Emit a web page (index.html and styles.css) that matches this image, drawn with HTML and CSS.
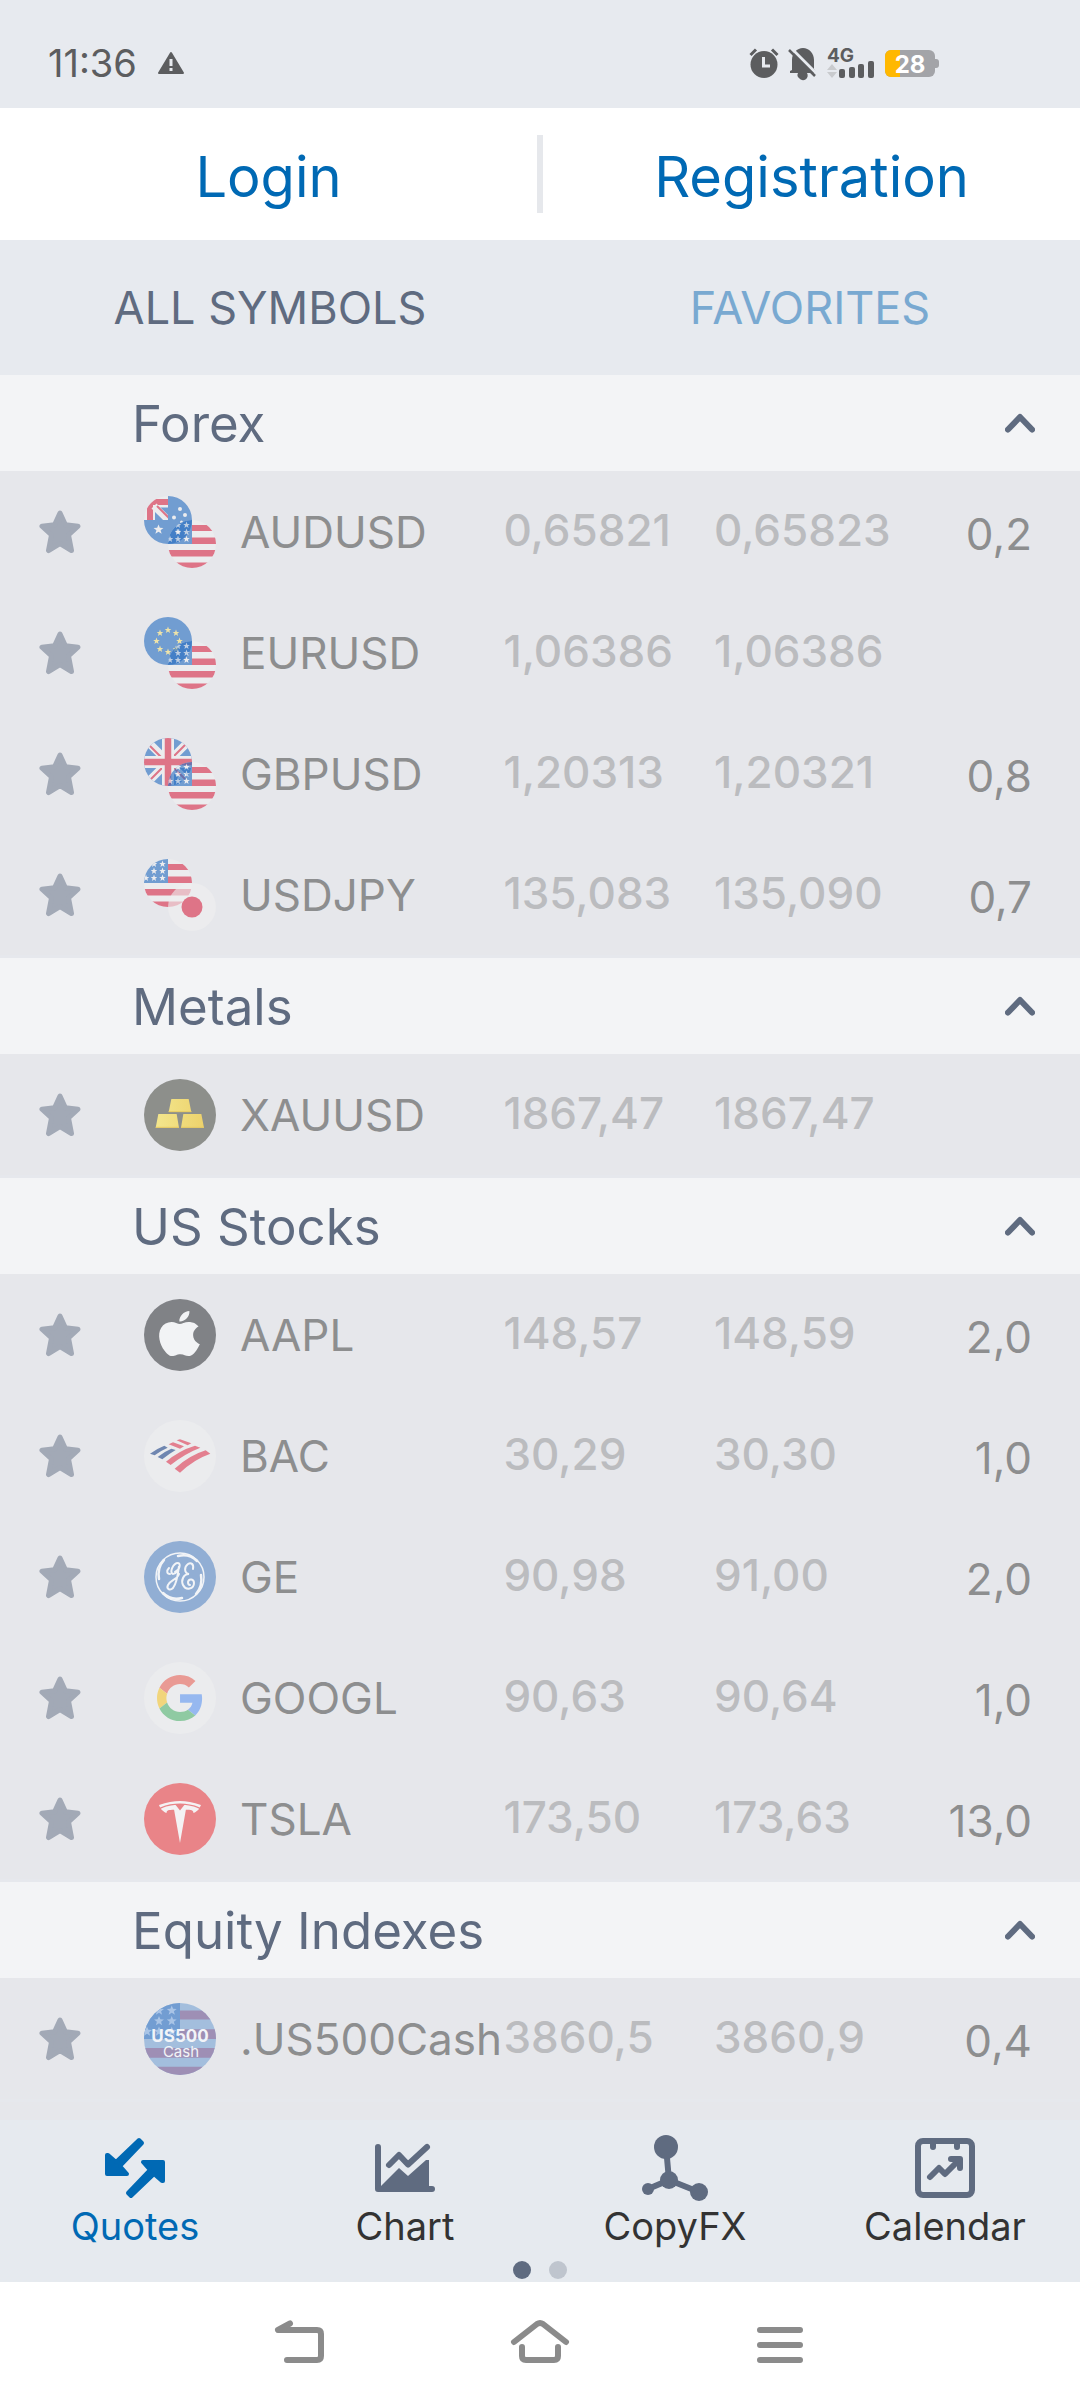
FILE: index.html
```html
<!doctype html>
<html lang="en">
<head>
<meta charset="UTF-8">
<meta name="viewport" content="width=device-width">
<title>Quotes</title>
<link rel="stylesheet" href="styles.css">
</head>

<body>
<!-- shared shapes -->
<svg class="defs" aria-hidden="true">
	<defs>
		<clipPath id="round"><circle cx="24" cy="24" r="24"/></clipPath>
		<clipPath id="canton"><path d="M0 24A24 24 0 0 1 24 0V24z"/></clipPath>
		<linearGradient id="goldFill"><stop offset="0" stop-color="#f3e68d"/><stop offset="1" stop-color="#edd26c"/></linearGradient>
		<path id="pt" d="M0-3.4.9-1.1 3.3-1 1.4.5 2.1 2.9 0 1.5-2.1 2.9-1.4.5-3.3-1-.9-1.1z"/>
	</defs>
	<symbol id="star" viewBox="0 0 42 44">
		<path d="M21 3l5.400 11.800L39 16.200 29.500 25 32.500 40.500 21 33.500 9.500 40.500 12.500 25 3 16.200 15.600 14.800z" fill="#a2a9b6" stroke="#a2a9b6" stroke-width="5" stroke-linejoin="round"/>
	</symbol>
	<symbol id="up" viewBox="0 0 30 20">
		<path d="M3 16.500 15 4 27 16.500" fill="none" stroke="#5f6b80" stroke-width="6" stroke-linecap="round" stroke-linejoin="round"/>
	</symbol>
	<symbol id="us" viewBox="0 0 48 48">
		<g clip-path="url(#round)">
			<path fill="#f0f0f0" d="M0 0h48v48H0z"/>
			<path fill="#d92946" d="M24 5h24v6H24zM24 17.500h24V24H24zM0 30h48v6.500H0zM0 42.500h48V48H0z"/>
			<path fill="#256cc1" d="M0 0h24v24H0z"/>
			<g fill="#f0f0f0"><use href="#pt" x="10" y="5"/><use href="#pt" x="18.500" y="5"/><use href="#pt" x="10" y="12"/><use href="#pt" x="18.500" y="12"/><use href="#pt" x="2" y="19"/><use href="#pt" x="10" y="19"/><use href="#pt" x="18.500" y="19"/></g>
		</g>
	</symbol>
	<symbol id="au" viewBox="0 0 48 48">
		<path fill="#256cc1" d="M24 0A24 24 0 1 1 0 24H24z"/>
		<g clip-path="url(#canton)">
			<path fill="#f0f0f0" d="M0 0h24v24H0z"/>
			<path fill="#d92946" d="M3 24V10l7-7h14v6H9v15z"/>
			<path fill="#256cc1" d="M12 11.500h12V24H11V12z"/>
			<path stroke="#f0f0f0" stroke-width="7" d="M10 10 26 26"/>
			<path stroke="#d92946" stroke-width="2" d="M13 10 26 23"/>
		</g>
		<g fill="#f0f0f0"><use href="#pt" transform="translate(14.500 33.500) scale(1.500)"/><circle cx="36" cy="13" r="2"/><circle cx="30" cy="21.500" r="2"/><circle cx="41" cy="19" r="2"/><circle cx="37.500" cy="26" r="1.500"/><circle cx="34" cy="35.500" r="2.500"/></g>
	</symbol>
	<symbol id="eu" viewBox="0 0 48 48">
		<circle cx="24" cy="24" r="24" fill="#256cc1"/>
		<g fill="#f5e27c"><use href="#pt" x="24" y="13"/><use href="#pt" x="32" y="16"/><use href="#pt" x="35.500" y="24"/><use href="#pt" x="32" y="32"/><use href="#pt" x="24" y="35"/><use href="#pt" x="16" y="32"/><use href="#pt" x="12.500" y="24"/><use href="#pt" x="16" y="16"/></g>
	</symbol>
	<symbol id="gb" viewBox="0 0 48 48">
		<g clip-path="url(#round)">
			<path fill="#256cc1" d="M0 0h48v48H0z"/>
			<path stroke="#f0f0f0" stroke-width="8" d="M0 0 48 48M48 0 0 48"/>
			<path stroke="#d92946" stroke-width="2" d="M4 6 20 22M42 6 26 22M6 42 20 28M28 28 44 44"/>
			<path stroke="#f0f0f0" stroke-width="12" d="M24 0v48M0 24h48"/>
			<path stroke="#d92946" stroke-width="6.500" d="M24 0v48M0 24h48"/>
		</g>
	</symbol>
	<symbol id="jp" viewBox="0 0 48 48">
		<circle cx="24" cy="24" r="24" fill="#f0f0f0"/>
		<circle cx="24" cy="24" r="10.500" fill="#d92946"/>
	</symbol>
</svg>

<header class="status">
	<time>11:36</time>
	<svg class="warn" viewBox="0 0 28 24"><path d="M14 2 26 22H2z" fill="#5c5d5f" stroke="#5c5d5f" stroke-width="2" stroke-linejoin="round"/><path d="M14 8v7M14 17v3" stroke="#e7eaef" stroke-width="3"/></svg>
	<div class="status-right">
		<svg width="30" height="30" viewBox="0 0 30 30"><circle cx="15" cy="16.500" r="13.500" fill="#5c5d5f"/><path d="M1.500 7 7 1.500M23 1.500 28.500 7" stroke="#5c5d5f" stroke-width="3"/><path d="M14.500 9v9H21" fill="none" stroke="#e7eaef" stroke-width="3"/></svg>
		<svg width="28" height="30" viewBox="0 0 28 30"><path d="M3 22V12C3 5 8 0 14 0s11 5 11 12v9l2 3v1H18a4 4 0 0 1-8 5 4 4 0 0 1-1-5H1v-2z" fill="#5c5d5f"/><path d="M2 0 28 26" stroke="#e7eaef" stroke-width="3"/><path d="M0 2 26 28" stroke="#5c5d5f" stroke-width="2.500"/></svg>
		<svg class="signal" width="48" height="30" viewBox="0 0 48 30"><text x="0" y="14">4G</text><path d="M0 22 5 16l5 6zM0 24h10l-5 6z" fill="#c9cbce"/><g fill="#5c5d5f"><rect x="12" y="21" width="6" height="9" rx="2"/><rect x="22" y="19" width="6" height="11" rx="2"/><rect x="31" y="16" width="6" height="14" rx="2"/><rect x="41" y="13" width="6" height="17" rx="2"/></g></svg>
		<svg class="battery" width="54" height="27" viewBox="0 0 54 27"><path d="M49 9h2a3 3 0 0 1 3 3v3a3 3 0 0 1-3 3h-2z" fill="#a3a4a8"/><rect width="50" height="27" rx="6" fill="#a3a4a8"/><path d="M6 0h9v27H6a6 6 0 0 1-6-6V6a6 6 0 0 1 6-6z" fill="#ffb800"/><text x="25" y="23" text-anchor="middle">28</text></svg>
	</div>
</header>

<div class="account">
	<a href="#">Login</a>
	<a href="#">Registration</a>
</div>

<div class="tabs">
	<button class="on">ALL SYMBOLS</button>
	<button>FAVORITES</button>
</div>

<main>
<table class="quotes">
	<colgroup><col class="c-star"><col class="c-name"><col class="c-price"><col class="c-price"><col></colgroup>
	<tbody>
		<tr class="group"><th colspan="5"><div><span>Forex</span><button aria-label="Collapse"><svg><use href="#up"/></svg></button></div></th></tr>
		<tr>
			<td><button class="fav" aria-label="Favorite"><svg><use href="#star"/></svg></button></td>
			<td><div class="name"><svg viewBox="0 0 72 72"><use href="#au" width="48" height="48" opacity=".6"/><use href="#us" x="24" y="24" width="48" height="48" opacity=".6"/></svg>AUDUSD</div></td>
			<td class="price">0,65821</td><td class="price">0,65823</td><td class="spread">0,2</td>
		</tr>
		<tr>
			<td><button class="fav" aria-label="Favorite"><svg><use href="#star"/></svg></button></td>
			<td><div class="name"><svg viewBox="0 0 72 72"><use href="#eu" width="48" height="48" opacity=".6"/><use href="#us" x="24" y="24" width="48" height="48" opacity=".6"/></svg>EURUSD</div></td>
			<td class="price">1,06386</td><td class="price">1,06386</td><td class="spread"></td>
		</tr>
		<tr>
			<td><button class="fav" aria-label="Favorite"><svg><use href="#star"/></svg></button></td>
			<td><div class="name"><svg viewBox="0 0 72 72"><use href="#gb" width="48" height="48" opacity=".6"/><use href="#us" x="24" y="24" width="48" height="48" opacity=".6"/></svg>GBPUSD</div></td>
			<td class="price">1,20313</td><td class="price">1,20321</td><td class="spread">0,8</td>
		</tr>
		<tr>
			<td><button class="fav" aria-label="Favorite"><svg><use href="#star"/></svg></button></td>
			<td><div class="name"><svg viewBox="0 0 72 72"><use href="#us" width="48" height="48" opacity=".6"/><use href="#jp" x="24" y="24" width="48" height="48" opacity=".6"/></svg>USDJPY</div></td>
			<td class="price">135,083</td><td class="price">135,090</td><td class="spread">0,7</td>
		</tr>
	</tbody>
	<tbody>
		<tr class="group"><th colspan="5"><div><span>Metals</span><button aria-label="Collapse"><svg><use href="#up"/></svg></button></div></th></tr>
		<tr>
			<td><button class="fav" aria-label="Favorite"><svg><use href="#star"/></svg></button></td>
			<td><div class="name"><svg viewBox="0 0 216 216"><circle cx="108" cy="108" r="108" fill="#8d8f8b"/><path fill="url(#goldFill)" d="M82 60h52l8 39H74zM43 105h55l7 41H35zM118 105h54l8 41h-69z"/><path stroke="#e8cb62" stroke-width="3" d="M74 98h68M35 145h70M111 145h69"/></svg>XAUUSD</div></td>
			<td class="price">1867,47</td><td class="price">1867,47</td><td class="spread"></td>
		</tr>
	</tbody>
	<tbody>
		<tr class="group"><th colspan="5"><div><span>US Stocks</span><button aria-label="Collapse"><svg><use href="#up"/></svg></button></div></th></tr>
		<tr>
			<td><button class="fav" aria-label="Favorite"><svg><use href="#star"/></svg></button></td>
			<td><div class="name"><svg viewBox="0 0 72 72"><circle cx="36" cy="36" r="36" fill="#808286"/><path fill="#f2f3f5" transform="translate(10.500 12) scale(2.080 1.880)" d="M12.152 6.896c-.948 0-2.415-1.078-3.960-1.040-2.040.027-3.910 1.183-4.961 3.014-2.117 3.675-.546 9.103 1.519 12.090 1.013 1.454 2.208 3.090 3.792 3.039 1.520-.065 2.090-.987 3.935-.987 1.831 0 2.350.987 3.960.948 1.637-.026 2.676-1.480 3.676-2.948 1.156-1.688 1.636-3.325 1.662-3.415-.039-.013-3.182-1.221-3.220-4.857-.026-3.040 2.480-4.494 2.597-4.559-1.429-2.090-3.623-2.324-4.390-2.376-2-.156-3.675 1.090-4.610 1.090zM15.530 3.830c.843-1.012 1.400-2.427 1.245-3.830-1.207.052-2.662.805-3.532 1.818-.780.896-1.454 2.338-1.273 3.714 1.338.104 2.715-.688 3.559-1.701"/></svg>AAPL</div></td>
			<td class="price">148,57</td><td class="price">148,59</td><td class="spread">2,0</td>
		</tr>
		<tr>
			<td><button class="fav" aria-label="Favorite"><svg><use href="#star"/></svg></button></td>
			<td><div class="name"><svg viewBox="0 0 216 216"><circle cx="108" cy="108" r="108" fill="#ebecee"/><path fill="#6f86b0" d="M18 101Q38 86 61 77l10 6Q50 92 32 106zM41 111Q60 95 82 86l13 4Q74 102 55 118z"/><path fill="#e37f8f" d="M66 125Q106 91 153 77l16 6Q122 101 80 135zM92 146Q136 106 185 91l14 10Q150 118 108 158zM74 73l13-6 33 12-12 7zM98 61l10-3 34 12-11 6z"/></svg>BAC</div></td>
			<td class="price">30,29</td><td class="price">30,30</td><td class="spread">1,0</td>
		</tr>
		<tr>
			<td><button class="fav" aria-label="Favorite"><svg><use href="#star"/></svg></button></td>
			<td><div class="name"><svg viewBox="0 0 72 72"><circle cx="36" cy="36" r="36" fill="#91aed4"/><g fill="none" stroke="#f2f4f7" stroke-linecap="round"><circle cx="36" cy="36" r="24" stroke-width="1.500"/><path stroke-width="2.500" d="M34 15q11-3 19 5M57 34q2 11-5 19M38 57q-11 3-19-5M15 38q-2-11 5-19"/><path stroke-width="2" d="M31 31c5-2 6-9 3-9-5 0-9 10-5 11 3 0 6-4 6-8-1 8-2 17-6 22-3 3-7 1-5-3 2-5 9-5 11-11M25 27c-3 3-2 6 1 6M49 28c1-5-2-7-5-5-4 3-4 9 1 10-6 0-8 7-6 11 3 6 11 4 11-2 0-4-5-5-6-1 0 2 1 3 2 3"/></g></svg>GE</div></td>
			<td class="price">90,98</td><td class="price">91,00</td><td class="spread">2,0</td>
		</tr>
		<tr>
			<td><button class="fav" aria-label="Favorite"><svg><use href="#star"/></svg></button></td>
			<td><div class="name"><svg viewBox="0 0 72 72"><circle cx="36" cy="36" r="36" fill="#ebecee"/><g transform="translate(13 13) scale(.960)"><path fill="#e99a94" d="M24 9.500c3.540 0 6.710 1.220 9.210 3.600l6.850-6.850C35.900 2.380 30.470 0 24 0 14.620 0 6.510 5.380 2.560 13.220l7.980 6.190C12.430 13.720 17.740 9.500 24 9.500z"/><path fill="#96b8f0" d="M46.980 24.550c0-1.570-.15-3.090-.38-4.550H24v9.020h12.940c-.58 2.960-2.260 5.480-4.780 7.180l7.730 6c4.510-4.180 7.090-10.360 7.090-17.650z"/><path fill="#f1d57c" d="M10.530 28.590c-.48-1.450-.76-2.990-.76-4.590s.27-3.140.76-4.590l-7.980-6.190C.92 16.460 0 20.120 0 24c0 3.880.92 7.540 2.560 10.780l7.970-6.190z"/><path fill="#8fcaa2" d="M24 48c6.480 0 11.930-2.130 15.890-5.810l-7.730-6c-2.150 1.450-4.920 2.300-8.160 2.300-6.260 0-11.570-4.220-13.470-9.910l-7.980 6.190C6.510 42.620 14.620 48 24 48z"/></g></svg>GOOGL</div></td>
			<td class="price">90,63</td><td class="price">90,64</td><td class="spread">1,0</td>
		</tr>
		<tr>
			<td><button class="fav" aria-label="Favorite"><svg><use href="#star"/></svg></button></td>
			<td><div class="name"><svg viewBox="0 0 72 72"><circle cx="36" cy="36" r="36" fill="#e98488"/><path fill="#f4f2f4" transform="translate(15 18) scale(1.750)" d="M12 5.362l2.475-3.026s4.245.090 8.471 2.054c-1.082 1.636-3.231 2.438-3.231 2.438-.146-1.439-1.154-1.790-4.354-1.790L12 24 8.619 5.034c-3.180 0-4.188.354-4.335 1.792 0 0-2.146-.795-3.229-2.430C5.280 2.431 9.525 2.340 9.525 2.340L12 5.362zm0-3.899c3.415-.030 7.326.528 11.328 2.280.535-.968.672-1.395.672-1.395C19.625.612 15.528.015 12 0 8.472.015 4.375.610 0 2.349c0 0 .195.525.672 1.396C4.674 1.989 8.585 1.435 12 1.460z"/></svg>TSLA</div></td>
			<td class="price">173,50</td><td class="price">173,63</td><td class="spread">13,0</td>
		</tr>
	</tbody>
	<tbody>
		<tr class="group"><th colspan="5"><div><span>Equity Indexes</span><button aria-label="Collapse"><svg><use href="#up"/></svg></button></div></th></tr>
		<tr>
			<td><button class="fav" aria-label="Favorite"><svg><use href="#star"/></svg></button></td>
			<td><div class="name"><svg class="us500" viewBox="0 0 72 72"><g clip-path="url(#round)" transform="scale(1.500)"><path fill="#a3bedd" d="M0 0h48v48H0z"/><path fill="#9e8fb5" d="M24 5h24v6H24zM24 17.500h24V24H24zM0 30h48v6.500H0zM0 42.500h48V48H0z"/><path fill="#729dd2" d="M0 0h24v24H0z"/><g fill="#a9c4e6"><use href="#pt" x="10" y="5"/><use href="#pt" x="18.500" y="5"/><use href="#pt" x="10" y="12"/><use href="#pt" x="18.500" y="12"/><use href="#pt" x="2" y="19"/><use href="#pt" x="10" y="19"/><use href="#pt" x="18.500" y="19"/></g></g><text class="b" x="36" y="39" text-anchor="middle">US500</text><text x="37" y="54" text-anchor="middle">Cash</text></svg>.US500Cash</div></td>
			<td class="price">3860,5</td><td class="price">3860,9</td><td class="spread">0,4</td>
		</tr>
	</tbody>
</table>
</main>

<nav class="menu">
	<ul>
		<li class="on"><a href="#"><svg viewBox="-3 -3 66 66"><g fill="#0069b4" stroke="#0069b4" stroke-width="4" stroke-linejoin="round"><path d="M2 17v19h20l-7-8L37 5l-3-3-23 22-8-7z"/><path transform="rotate(180 30 30)" d="M2 17v19h20l-7-8L37 5l-3-3-23 22-8-7z"/></g></svg>Quotes</a></li>
		<li><a href="#"><svg viewBox="-3 -9 66 66"><g fill="none" stroke="#5f6b80" stroke-width="6" stroke-linecap="round" stroke-linejoin="round"><path d="M3 3v42h54"/><path d="M14 21 24 11l9 9.500L52 3"/></g><path fill="#5f6b80" d="M6 42 24 24l9 8 18-16h3v29H6z"/></svg>Chart</a></li>
		<li><a href="#"><svg viewBox="0 0 66 66"><path fill="none" stroke="#5f6b80" stroke-width="6" d="M24 12 27 45 6 54M27 45l30 12"/><g fill="#5f6b80"><circle cx="24" cy="12" r="12"/><circle cx="27" cy="45" r="9"/><circle cx="6" cy="54" r="6"/><circle cx="57" cy="57" r="9"/></g></svg>CopyFX</a></li>
		<li><a href="#"><svg viewBox="-3 -3 66 66"><g fill="none" stroke="#5f6b80" stroke-width="6" stroke-linecap="round" stroke-linejoin="round"><rect x="3" y="3" width="54" height="54" rx="5"/><path d="M18 4v5M42 4v5M15 39l9-9 6 6 14-14M36 21h9v9"/></g></svg>Calendar</a></li>
	</ul>
	<div class="dots"><i class="on"></i><i></i></div>
</nav>

<footer class="sysbar">
	<button aria-label="Back"><svg viewBox="0 0 60 54"><path d="M20 5.500 8 12h39q4 0 4 4v22q0 4-4 4H17"/></svg></button>
	<button aria-label="Home"><svg viewBox="0 0 60 54"><path d="M4 24 27 6q3-2 6 0l23 18M12 29v9q0 4 4 4h28q4 0 4-4v-9"/></svg></button>
	<button aria-label="Recent"><svg viewBox="0 0 60 54"><path d="M10 12h40M10 27h40M10 42h40"/></svg></button>
</footer>
</body>
</html>
```
FILE: styles.css
```css
*{ margin:0; padding:0; list-style:none; box-sizing:border-box; }
body{ min-height:100vh; display:flex; flex-direction:column; background:#e6e7eb; font-family:Inter,Roboto,sans-serif; font-size:45px; color:#5f6b80; }
a{ color:inherit; text-decoration:none; }
button{ border:none; background:none; font:inherit; color:inherit; cursor:pointer; }
svg{ display:block; }
.defs{ position:absolute; width:0; height:0; }

/* phone status bar */
.status{ height:108px; padding:18px 141px 0 48px; display:flex; align-items:center; background:#e7eaef; color:#5c5d5f; font-size:38px; }
.status .warn{ width:28px; height:24px; margin-left:20px; }
.status-right{ margin-left:auto; display:flex; align-items:center; gap:10px; }
.status-right svg{ overflow:visible; }
.status-right text{ font-weight:700; }
.signal text{ font-size:19px; fill:#5c5d5f; }
.battery text{ font-size:24px; fill:#fff; }

.account{ height:132px; display:flex; align-items:center; background:#fff; color:#0069b4; font-size:56px; }
.account a{ flex:1; height:78px; line-height:84px; text-align:center; }
.account a:first-child{ border-right:6px solid #e6e8ec; }

.tabs{ height:135px; display:flex; background:#e7eaef; }
.tabs button{ flex:1; color:#79a9d1; }
.tabs button.on{ color:#5f6b80; }

main{ flex:1; }
.quotes{ width:100%; table-layout:fixed; border-collapse:separate; border-spacing:0; }
.c-star{ width:120px; }
.c-name{ width:35.500%; }
.c-price{ width:19.500%; }
.quotes td{ height:121px; white-space:nowrap; vertical-align:middle; font-size:44px; }
.quotes tr:last-child td{ border-bottom:3px solid #e6e8ed; height:124px; }
.group div{ height:96px; padding:0 45px 0 132px; display:flex; align-items:center; justify-content:space-between; background:#f3f4f6; font-size:51px; font-weight:400; }
.group svg{ width:30px; height:20px; }
.fav{ display:block; margin-left:39px; }
.fav svg{ width:42px; height:44px; }
.name{ display:flex; align-items:center; gap:24px; padding-left:24px; color:#8d8e8f; }
.name svg{ flex:none; width:72px; height:72px; }
.price{ padding-bottom:4px; color:#bbbcbf; font-weight:500; }
.spread{ padding:4px 48px 0 0; text-align:right; color:#8d8e8f; }
.us500 text{ font-size:15px; fill:#f2f4f8; }
.us500 .b{ font-size:17px; font-weight:700; }

/* bottom menu */
.menu{ height:162px; padding-top:15px; background:#e6eaef; color:#333; font-size:38px; }
.menu ul{ display:flex; }
.menu li{ flex:1; }
.menu li.on{ color:#0069b4; }
.menu a{ display:flex; flex-direction:column; align-items:center; line-height:50px; }
.menu svg{ width:66px; height:66px; }
.dots{ display:flex; justify-content:center; gap:18px; margin-top:10px; }
.dots i{ width:18px; height:18px; border-radius:50%; background:#bfc5ce; }
.dots i.on{ background:#5f6b80; }

.sysbar{ height:126px; display:flex; align-items:center; justify-content:center; gap:180px; background:#fff; }
.sysbar svg{ width:60px; height:54px; fill:none; stroke:#8b8b8b; stroke-width:6; stroke-linecap:round; stroke-linejoin:round; }
```
